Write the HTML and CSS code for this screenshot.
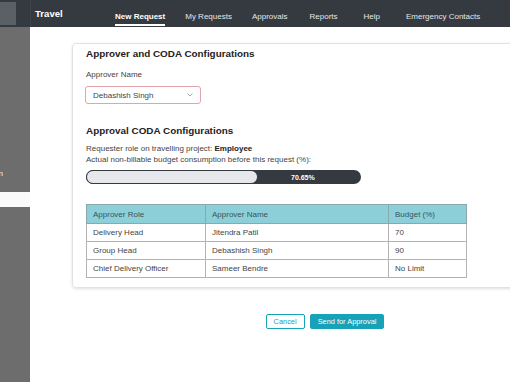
FILE: index.html
```html
<!DOCTYPE html>
<html lang="en">
<head>
    <meta charset="UTF-8">
    <meta name="viewport" content="width=device-width, initial-scale=1.0">
    <title>Travel - New Request</title>
    <link rel="stylesheet" href="styles.css">
</head>
<body>
    <aside class="sidebar">
        <div class="sidebar-top"><div class="sidebar-logo"></div></div>
        <div class="sidebar-panel">
            <div class="sidebar-item">Application</div>
        </div>
        <div class="sidebar-gap"></div>
        <div class="sidebar-panel sidebar-fill"></div>
    </aside>

    <div class="main">
        <header class="topbar">
            <div class="brand">Travel</div>
            <nav class="nav">
                <a class="nav-link active">New Request</a>
                <a class="nav-link">My Requests</a>
                <a class="nav-link">Approvals</a>
                <a class="nav-link">Reports</a>
                <a class="nav-link">Help</a>
                <a class="nav-link">Emergency Contacts</a>
            </nav>
        </header>

        <div class="content">
            <div class="card">
                <h2 class="card-title">Approver and CODA Configurations</h2>
                <label class="field-label">Approver Name</label>
                <div class="select">
                    <span>Debashish Singh</span>
                    <svg width="6" height="4" viewBox="0 0 6 4"><path d="M0.5 0.5 L3 3 L5.5 0.5" fill="none" stroke="#a0a0a0" stroke-width="0.9"/></svg>
                </div>

                <h2 class="card-title second">Approval CODA Configurations</h2>
                <p class="line">Requester role on travelling project: <strong>Employee</strong></p>
                <p class="line">Actual non-billable budget consumption before this request (%):</p>
                <div class="progress">
                    <div class="progress-fill"></div>
                    <span class="progress-label">70.65%</span>
                </div>

                <table class="approvers">
                    <thead>
                        <tr><th class="col-role">Approver Role</th><th class="col-name">Approver Name</th><th class="col-budget">Budget (%)</th></tr>
                    </thead>
                    <tbody>
                        <tr><td>Delivery Head</td><td>Jitendra Patil</td><td>70</td></tr>
                        <tr><td>Group Head</td><td>Debashish Singh</td><td>90</td></tr>
                        <tr><td>Chief Delivery Officer</td><td>Sameer Bendre</td><td>No Limit</td></tr>
                    </tbody>
                </table>
            </div>

            <div class="actions">
                <button class="btn btn-outline">Cancel</button>
                <button class="btn btn-primary">Send for Approval</button>
            </div>
        </div>
    </div>
</body>
</html>
```

FILE: styles.css
```css
body {
    margin: 0;
    font-family: "Liberation Sans", Arial, sans-serif;
    color: #333;
    background: #fff;
    display: flex;
    height: 382px;
    overflow: hidden;
}
.sidebar {
    width: 30px;
    flex-shrink: 0;
    display: flex;
    flex-direction: column;
}
.sidebar-top {
    height: 27px;
    background: #343a40;
    padding: 2px 14px 2px 0;
    box-sizing: border-box;
}
.sidebar-logo {
    height: 100%;
    background: #5b6067;
}
.sidebar-panel {
    height: 165px;
    background: #6d6d6d;
    display: flex;
    flex-direction: column;
    justify-content: flex-end;
    overflow: hidden;
}
.sidebar-item {
    display: flex;
    justify-content: flex-end;
    padding-right: 27px;
    margin-bottom: 14px;
    color: #f2f2f2;
    font-size: 8px;
    white-space: nowrap;
}
.sidebar-gap {
    height: 15px;
    background: #fafafa;
}
.sidebar-fill {
    flex: 1;
}
.main {
    flex: 1;
    min-width: 0;
    overflow: hidden;
}
.topbar {
    height: 27px;
    background: #343a40;
    display: flex;
    align-items: flex-start;
    padding-left: 4px;
    border-left: 1px solid #3d434a;
}
.brand {
    width: 80px;
    color: #fff;
    font-weight: bold;
    font-size: 9.6px;
    line-height: 12px;
    padding-top: 8px;
}
.nav {
    display: flex;
    gap: 20px;
}
.nav-link {
    color: #e6e6e6;
    font-size: 8px;
    line-height: 10px;
    padding-top: 12px;
    height: 26px;
    box-sizing: border-box;
    border-bottom: 2px solid transparent;
    white-space: nowrap;
}
.nav-link.active {
    color: #fff;
    font-weight: bold;
    border-bottom-color: #fff;
}
.nav-link:nth-child(4) {
    margin-left: 2px;
}
.nav-link:nth-child(5) {
    margin-left: 6px;
}
.nav-link:nth-child(6) {
    margin-left: 6px;
}
.content {
    padding: 16px 0 0 42px;
}
.card {
    width: 506px;
    box-sizing: border-box;
    border: 1px solid #e2e2e2;
    border-radius: 4px;
    box-shadow: 0 1px 3px rgba(0,0,0,0.12);
    padding: 4px 13px 9px 13px;
}
.card-title {
    margin: 0;
    font-size: 9.9px;
    line-height: 12px;
    color: #222;
}
.card-title.second {
    margin-top: 21px;
    margin-bottom: 6px;
}
.field-label {
    display: block;
    margin-top: 10px;
    font-size: 8px;
    line-height: 10px;
    color: #444;
}
.select {
    margin-top: 6px;
    width: 116px;
    height: 18px;
    box-sizing: border-box;
    border: 1px solid #e3a3ab;
    border-radius: 3px;
    display: flex;
    align-items: center;
    justify-content: space-between;
    padding: 0 7px 0 7px;
    margin-left: -1px;
    font-size: 8px;
    color: #444;
}
.line {
    margin: 0;
    font-size: 8px;
    line-height: 11px;
    color: #444;
}
.line strong {
    color: #222;
}
.progress {
    margin-top: 5px;
    width: 275px;
    height: 14px;
    background: #343a40;
    border-radius: 7px;
    display: flex;
    align-items: center;
}
.progress-fill {
    width: 172px;
    height: 14px;
    box-sizing: border-box;
    background: #e6e8eb;
    border: 1.5px solid #343a40;
    border-radius: 7px;
}
.progress-label {
    margin-left: 33px;
    color: #fff;
    font-size: 7px;
    font-weight: bold;
}
.approvers {
    margin-top: 20px;
    border-collapse: collapse;
    font-size: 8px;
    color: #444;
}
.approvers th, .approvers td {
    border: 1px solid #b3b3b3;
    text-align: left;
    padding: 0 6px;
    font-weight: normal;
}
.approvers th {
    background: #8dcfd9;
    color: #35555a;
    height: 18px;
    border-color: #8aa9ad;
}
.approvers td {
    height: 17px;
}
.col-role { width: 106px; }
.col-name { width: 170px; }
.col-budget { width: 65px; }
.actions {
    width: 506px;
    margin-top: 26px;
    display: flex;
    justify-content: center;
    gap: 5px;
}
.btn {
    font-family: "Liberation Sans", Arial, sans-serif;
    font-size: 7.4px;
    height: 15px;
    border-radius: 2px;
    padding: 0 7px;
    cursor: pointer;
}
.btn-outline {
    background: #fff;
    color: #17a2b8;
    border: 1px solid #17a2b8;
}
.btn-primary {
    background: #17a2b8;
    color: #fff;
    border: 1px solid #17a2b8;
}
```
